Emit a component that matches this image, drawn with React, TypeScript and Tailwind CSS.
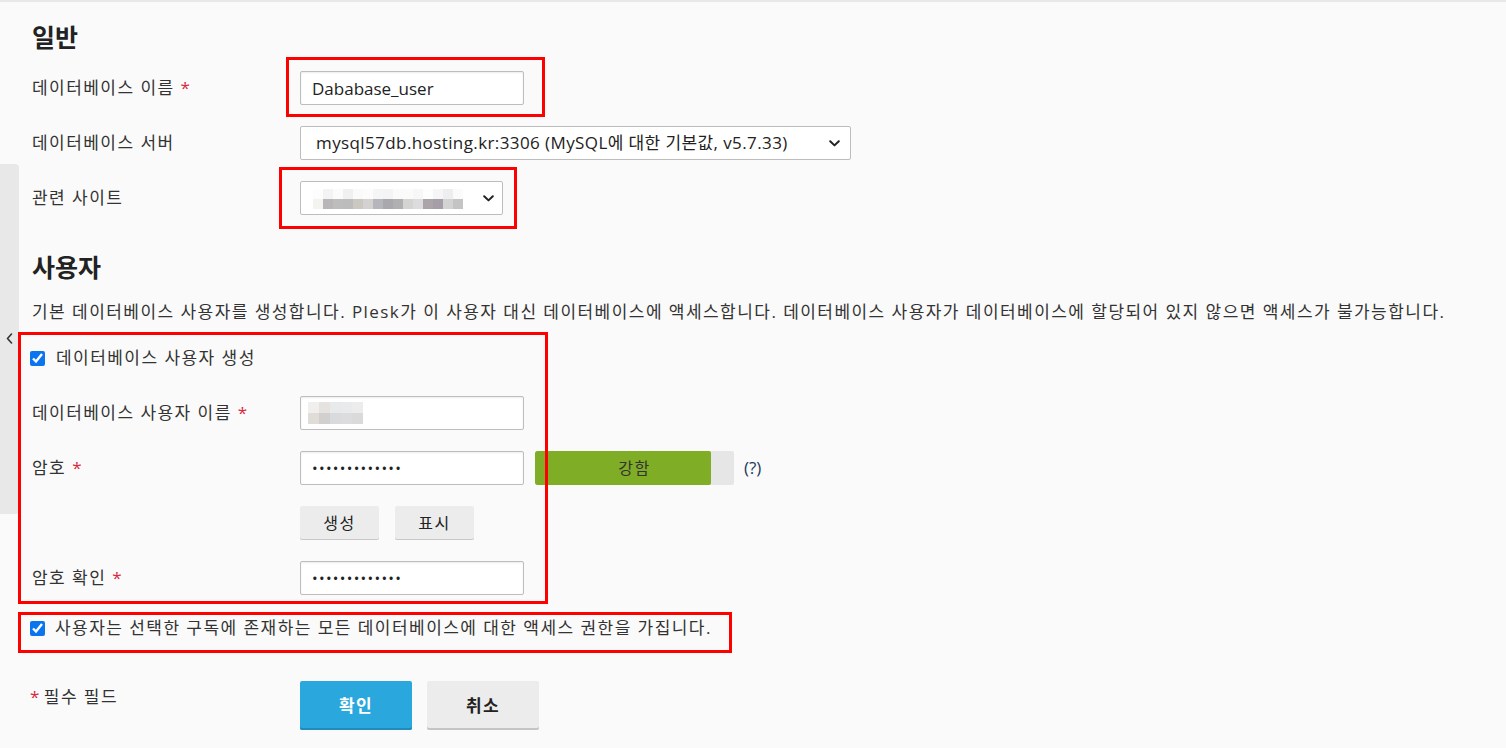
import React from 'react';

const FONT = "font-['Open_Sans','Noto_Sans_CJK_KR',sans-serif]";

function Req() {
  return <span className="ml-[6px] text-[#d8283f]">*</span>;
}

function Row({ label, required, children }: { label: string; required?: boolean; children: React.ReactNode }) {
  return (
    <div className="flex items-center h-[34px] mb-[21px]">
      <div className="w-[268px] shrink-0">
        {label}
        {required && <Req />}
      </div>
      {children}
    </div>
  );
}

function Chevron() {
  return (
    <svg width="11" height="7" viewBox="0 0 11 7" className="shrink-0">
      <path d="M1.2 1.2L5.5 5.4L9.8 1.2" fill="none" stroke="#222" strokeWidth="2" strokeLinecap="round" strokeLinejoin="round" />
    </svg>
  );
}

// pixelated placeholder for blurred text
function Pixels({ rows, cell }: { rows: string[][]; cell: string }) {
  return (
    <div className="flex flex-col">
      {rows.map((r, i) => (
        <div key={i} className="flex">
          {r.map((c, j) => (
            <div key={j} className={cell} style={{ background: c }} />
          ))}
        </div>
      ))}
    </div>
  );
}

const boxCls =
  'w-[224px] h-[34px] bg-white border border-[#bdbdbd] rounded-[2px] shadow-[inset_0_1px_2px_rgba(0,0,0,0.08)] text-[#222] outline-none';

const siteRows = [
  ['#fdfdfd', '#f3f3f3', '#fbfbfb', '#f0f0f0', '#fafafa', '#fcfcfc', '#f5f5f5', '#f4f4f6', '#fafafa', '#fbfbfb', '#f7f7f7', '#fdfdfd', '#f6f6f6', '#eeeef1', '#fbfbfb', '#ffffff'],
  ['#f5f3ef', '#b9b6b9', '#bdbdbd', '#bcbcbc', '#cbc7c1', '#d3d2d0', '#b4b6bc', '#a9a9ad', '#b1afb2', '#d4d4d2', '#dcdcdc', '#aba5aa', '#a59ea6', '#d3d3d3', '#c4c4c4', '#ffffff'],
];

const userRows = [
  ['#f1efed', '#e5e2df', '#e8e9eb', '#e9eaeb', '#ececec'],
  ['#e0dcd8', '#d2d0cf', '#d8dadd', '#dcdcdf', '#dadada'],
];

export default function App() {
  return (
    <div className={`${FONT} relative min-h-[748px] bg-[#fafafa] border-t-2 border-[#e8e8e8] text-[17px] leading-[24px] tracking-[1.45px] text-[#333]`}>
      {/* sidebar toggle tab */}
      <div className="absolute left-0 top-[162px] w-[19px] h-[350px] bg-[#e8e8e8] rounded-r-[4px] flex items-center justify-center">
        <svg width="7" height="11" viewBox="0 0 7 11" className="mt-[-2px]">
          <path d="M5.5 1L1.5 5.5L5.5 10" fill="none" stroke="#333" strokeWidth="1.6" strokeLinecap="round" strokeLinejoin="round" />
        </svg>
      </div>

      <div className="pl-[32px] pt-[20px]">
        <h2 className="text-[25px] leading-[30px] font-bold tracking-normal text-[#222] mb-[19px]">일반</h2>

        <Row label="데이터베이스 이름" required>
          <input className={`${boxCls} px-[11px] tracking-normal`} defaultValue="Dababase_user" />
        </Row>

        <Row label="데이터베이스 서버">
          <div className="relative">
            <select className="appearance-none w-[551px] h-[34px] bg-white border border-[#bdbdbd] rounded-[2px] pl-[15px] pr-[30px] text-[#222] tracking-[0.4px] outline-none">
              <option>mysql57db.hosting.kr:3306 (MySQL에 대한 기본값, v5.7.33)</option>
            </select>
            <span className="pointer-events-none absolute right-[11px] top-[14px] flex">
              <Chevron />
            </span>
          </div>
        </Row>

        <Row label="관련 사이트">
          <div className="w-[203px] h-[34px] bg-white border border-[#bdbdbd] rounded-[2px] pl-[12px] pr-[8px] flex items-center justify-between">
            <div className="mt-[1px]">
              <Pixels rows={siteRows} cell="w-[10px] h-[10px]" />
            </div>
            <Chevron />
          </div>
        </Row>

        <h2 className="text-[25px] leading-[30px] font-bold tracking-normal text-[#222] mt-[37px]">사용자</h2>
        <p className="mt-[18px]">
          기본 데이터베이스 사용자를 생성합니다. Plesk가 이 사용자 대신 데이터베이스에 액세스합니다. 데이터베이스 사용자가 데이터베이스에 할당되어 있지 않으면 액세스가 불가능합니다.
        </p>

        <label className="flex items-center h-[34px] mt-[17px] mb-[21px] -ml-[2px]">
          <input type="checkbox" defaultChecked className="w-[15px] h-[15px] accent-[#0b74ef]" />
          <span className="ml-[11px]">데이터베이스 사용자 생성</span>
        </label>

        <Row label="데이터베이스 사용자 이름" required>
          <div className={`${boxCls} flex items-center pl-[7px]`}>
            <Pixels rows={userRows} cell="w-[11px] h-[11px]" />
          </div>
        </Row>

        <Row label="암호" required>
          <input type="password" className={`${boxCls} px-[11px] text-[15px] tracking-[1.3px]`} defaultValue="abcdefghijklm" />
          <div className="ml-[11px] w-[199px] h-[34px] grid rounded-[2px] bg-[#e6e6e6] overflow-hidden">
            <div className="col-start-1 row-start-1 w-[176px] h-full bg-[#80ad26] rounded-[2px]" />
            <div className="col-start-1 row-start-1 flex items-center justify-center text-[16px] text-[#333]">강함</div>
          </div>
          <span className="ml-[10px] tracking-normal text-[#243a5c]">(?)</span>
        </Row>

        <div className="flex items-center h-[34px] mb-[21px]">
          <div className="w-[268px] shrink-0" />
          <button className="w-[79px] h-[34px] bg-[#ececec] rounded-[2px] shadow-[inset_0_-1px_0_#c8c8c8] text-[16px] text-[#222]">생성</button>
          <button className="ml-[16px] w-[79px] h-[34px] bg-[#ececec] rounded-[2px] shadow-[inset_0_-1px_0_#c8c8c8] text-[16px] text-[#222]">표시</button>
        </div>

        <Row label="암호 확인" required>
          <input type="password" className={`${boxCls} px-[11px] text-[15px] tracking-[1.3px]`} defaultValue="abcdefghijklm" />
        </Row>

        <label className="flex items-center h-[34px] -mt-[5px] -ml-[2px]">
          <input type="checkbox" defaultChecked className="w-[15px] h-[15px] accent-[#0b74ef]" />
          <span className="ml-[10px]">사용자는 선택한 구독에 존재하는 모든 데이터베이스에 대한 액세스 권한을 가집니다.</span>
        </label>

        <div className="flex items-start mt-[36px]">
          <div className="w-[268px] shrink-0 pt-[4px]">
            <span className="text-[#d8283f] -ml-[2px] mr-[3px]">*</span>필수 필드
          </div>
          <button className="w-[112px] h-[49px] bg-[#2aa8dd] rounded-[2px] shadow-[inset_0_-2px_0_#1f8cbc] text-white font-bold text-[17px]">확인</button>
          <button className="ml-[15px] w-[112px] h-[49px] bg-[#ececec] rounded-[2px] shadow-[inset_0_-2px_0_#c4c4c4] text-[#222] font-bold text-[17px]">취소</button>
        </div>
      </div>

      {/* red annotation boxes */}
      <div className="pointer-events-none absolute left-[286px] top-[55px] w-[259px] h-[60px] border-[3px] border-[#ff0000]" />
      <div className="pointer-events-none absolute left-[279px] top-[165px] w-[238px] h-[62px] border-[3px] border-[#ff0000]" />
      <div className="pointer-events-none absolute left-[18px] top-[330px] w-[530px] h-[272px] border-[3px] border-[#ff0000]" />
      <div className="pointer-events-none absolute left-[18px] top-[610px] w-[714px] h-[41px] border-[3px] border-[#ff0000]" />
    </div>
  );
}
